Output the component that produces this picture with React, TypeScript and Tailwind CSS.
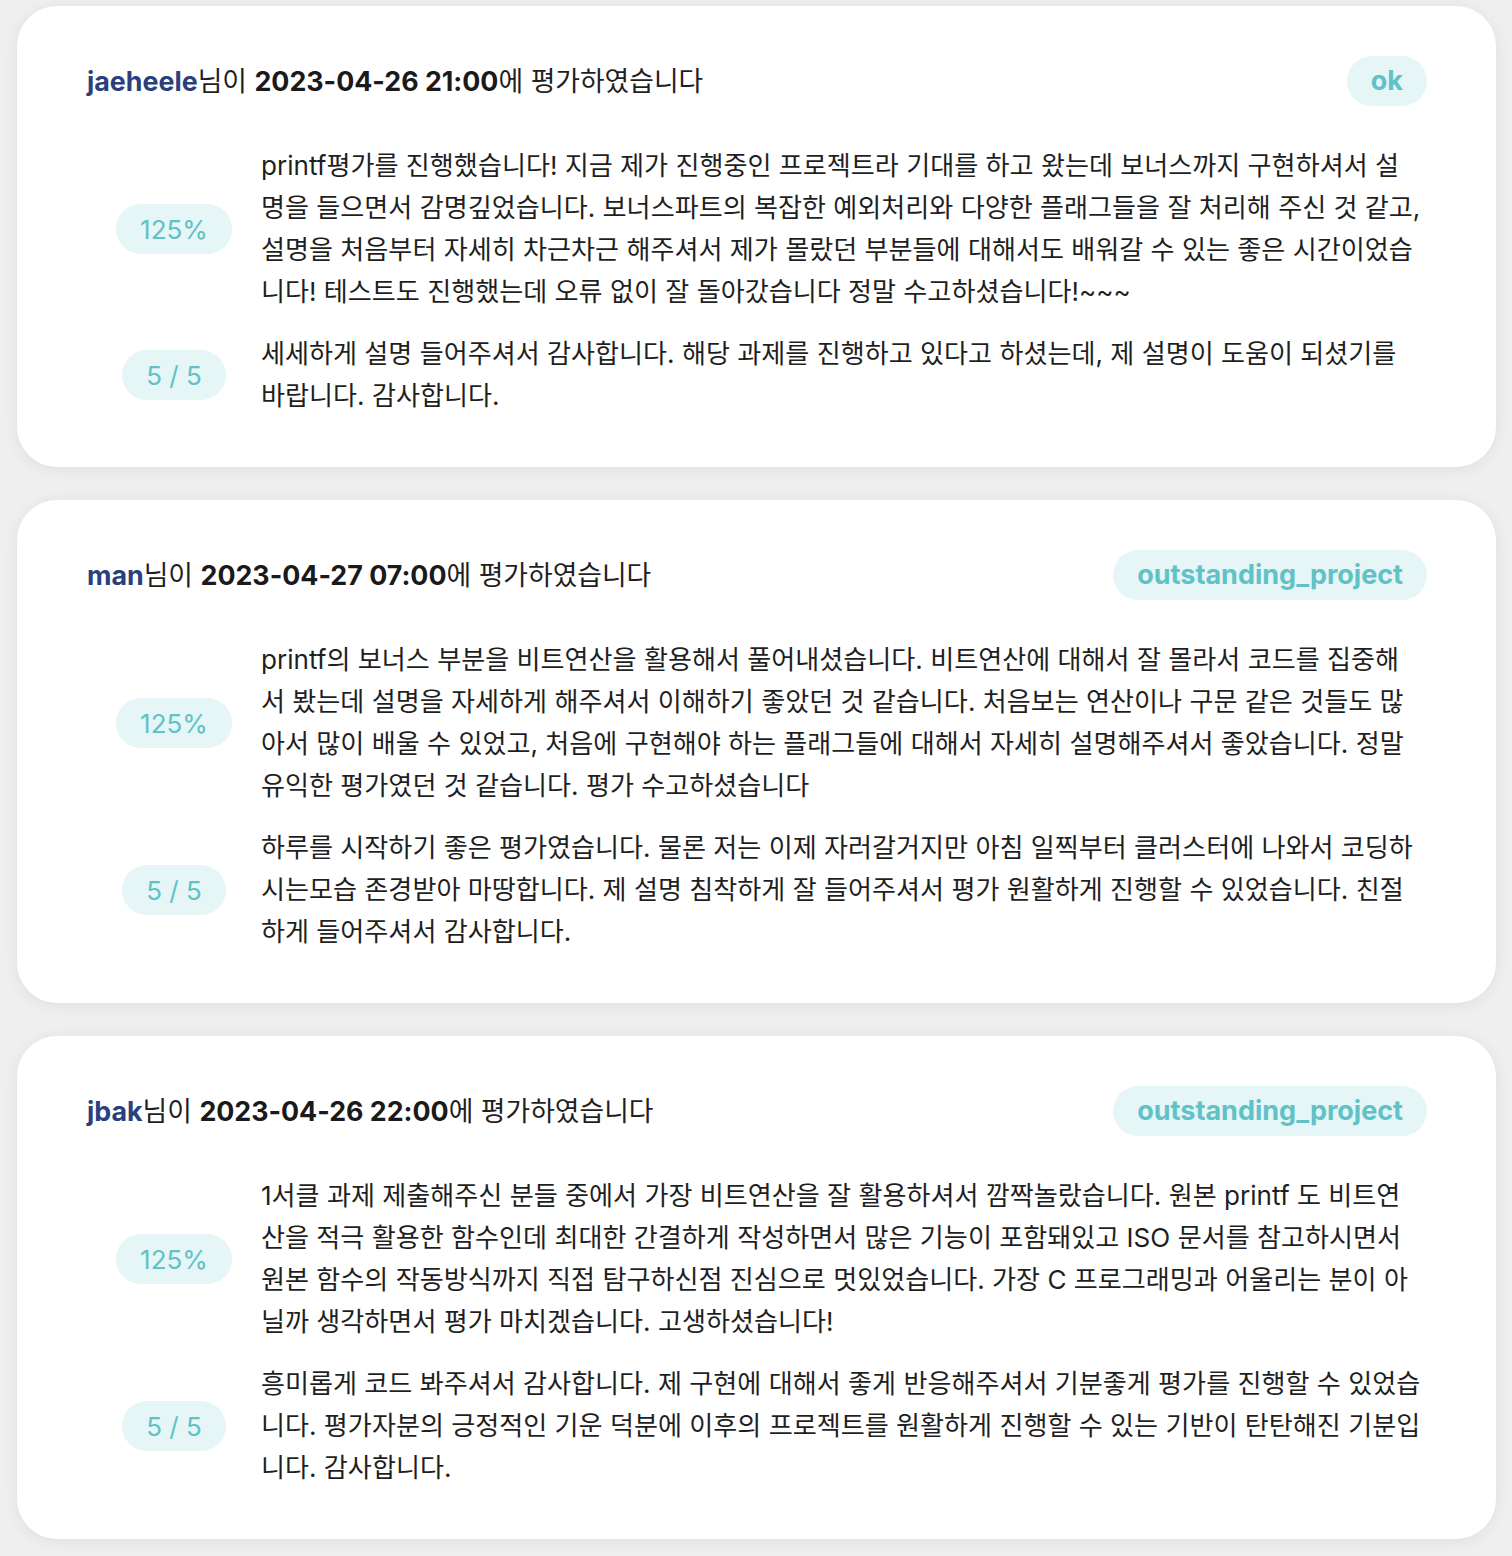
import React from "react";

type Review = {
  user: string;
  date: string;
  tag: string;
  comment: string[];
  feedback: string[];
};

const reviews: Review[] = [
  {
    user: "jaeheele",
    date: "2023-04-26 21:00",
    tag: "ok",
    comment: [
      "printf평가를 진행했습니다! 지금 제가 진행중인 프로젝트라 기대를 하고 왔는데 보너스까지 구현하셔서 설",
      "명을 들으면서 감명깊었습니다. 보너스파트의 복잡한 예외처리와 다양한 플래그들을 잘 처리해 주신 것 같고,",
      "설명을 처음부터 자세히 차근차근 해주셔서 제가 몰랐던 부분들에 대해서도 배워갈 수 있는 좋은 시간이었습",
      "니다! 테스트도 진행했는데 오류 없이 잘 돌아갔습니다 정말 수고하셨습니다!~~~",
    ],
    feedback: [
      "세세하게 설명 들어주셔서 감사합니다. 해당 과제를 진행하고 있다고 하셨는데, 제 설명이 도움이 되셨기를",
      "바랍니다. 감사합니다.",
    ],
  },
  {
    user: "man",
    date: "2023-04-27 07:00",
    tag: "outstanding_project",
    comment: [
      "printf의 보너스 부분을 비트연산을 활용해서 풀어내셨습니다. 비트연산에 대해서 잘 몰라서 코드를 집중해",
      "서 봤는데 설명을 자세하게 해주셔서 이해하기 좋았던 것 같습니다. 처음보는 연산이나 구문 같은 것들도 많",
      "아서 많이 배울 수 있었고, 처음에 구현해야 하는 플래그들에 대해서 자세히 설명해주셔서 좋았습니다. 정말",
      "유익한 평가였던 것 같습니다. 평가 수고하셨습니다",
    ],
    feedback: [
      "하루를 시작하기 좋은 평가였습니다. 물론 저는 이제 자러갈거지만 아침 일찍부터 클러스터에 나와서 코딩하",
      "시는모습 존경받아 마땅합니다. 제 설명 침착하게 잘 들어주셔서 평가 원활하게 진행할 수 있었습니다. 친절",
      "하게 들어주셔서 감사합니다.",
    ],
  },
  {
    user: "jbak",
    date: "2023-04-26 22:00",
    tag: "outstanding_project",
    comment: [
      "1서클 과제 제출해주신 분들 중에서 가장 비트연산을 잘 활용하셔서 깜짝놀랐습니다. 원본 printf 도 비트연",
      "산을 적극 활용한 함수인데 최대한 간결하게 작성하면서 많은 기능이 포함돼있고 ISO 문서를 참고하시면서",
      "원본 함수의 작동방식까지 직접 탐구하신점 진심으로 멋있었습니다. 가장 C 프로그래밍과 어울리는 분이 아",
      "닐까 생각하면서 평가 마치겠습니다. 고생하셨습니다!",
    ],
    feedback: [
      "흥미롭게 코드 봐주셔서 감사합니다. 제 구현에 대해서 좋게 반응해주셔서 기분좋게 평가를 진행할 수 있었습",
      "니다. 평가자분의 긍정적인 기운 덕분에 이후의 프로젝트를 원활하게 진행할 수 있는 기반이 탄탄해진 기분입",
      "니다. 감사합니다.",
    ],
  },
];

function Lines({ lines }: { lines: string[] }) {
  return (
    <p className="flex-1 min-w-0 text-[26.1px] leading-[42px] text-[#1f1f1f]">
      {lines.map((l, i) => (
        <span key={i} className="block whitespace-nowrap">
          {l}
        </span>
      ))}
    </p>
  );
}

function ScorePill({ label }: { label: string }) {
  return (
    <div className="w-[174px] shrink-0 flex justify-center">
      <div className="h-[50px] rounded-full bg-[#e6f5f6] px-[24px] flex items-center text-[26px] text-[#5ec2c7]">
        {label}
      </div>
    </div>
  );
}

function ReviewCard({ r }: { r: Review }) {
  return (
    <div className="bg-white rounded-[40px] shadow-[0_2px_16px_rgba(0,0,0,0.07)] py-[50px] pl-[70px] pr-[69px]">
      <div className="flex items-center justify-between h-[50px]">
        <div className="text-[26.8px] text-[#1f1f1f] leading-[50px] whitespace-nowrap">
          <span className="font-bold text-[#2b3f7c]">{r.user}</span>
          <span>님이 </span>
          <span className="font-bold text-[#1a1a1a]">{r.date}</span>
          <span>에 평가하였습니다</span>
        </div>
        <div className="h-[50px] rounded-full bg-[#e6f5f6] px-[24px] flex items-center text-[27px] font-bold text-[#5ec2c7]">
          {r.tag}
        </div>
      </div>
      <div className="mt-[39px] flex flex-col gap-[20px]">
        <div className="flex items-center">
          <ScorePill label="125%" />
          <Lines lines={r.comment} />
        </div>
        <div className="flex items-center">
          <ScorePill label="5 / 5" />
          <Lines lines={r.feedback} />
        </div>
      </div>
    </div>
  );
}

export default function App() {
  return (
    <div
      className="min-h-[1556px] bg-[#efefef] pt-[6px] pb-[16px] pl-[17px] pr-[16px] flex flex-col gap-[33px]"
      style={{ fontFamily: "Inter, 'Noto Sans CJK KR', sans-serif" }}
    >
      {reviews.map((r) => (
        <ReviewCard key={r.user} r={r} />
      ))}
    </div>
  );
}
